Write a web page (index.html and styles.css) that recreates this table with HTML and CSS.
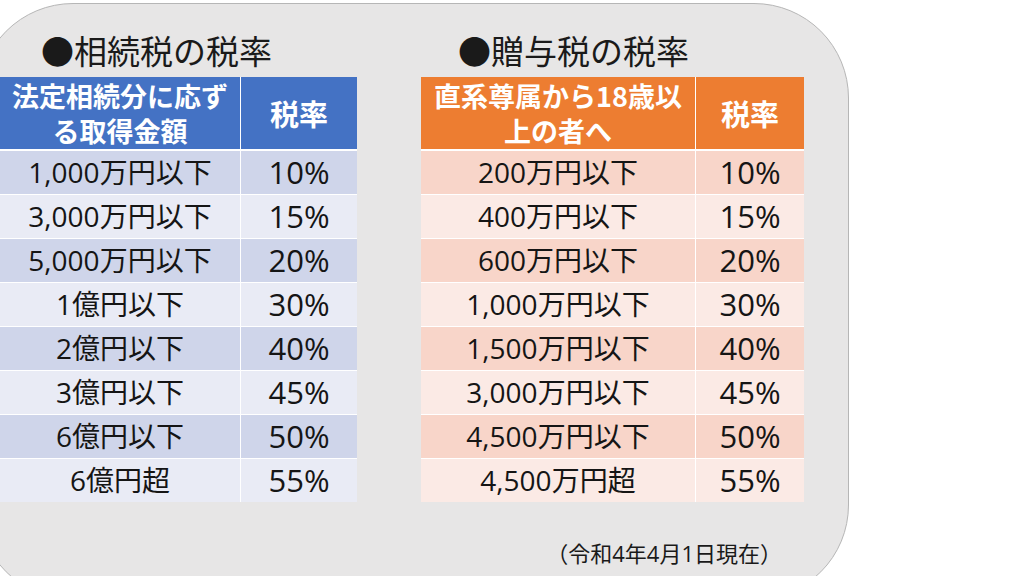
FILE: index.html
```html
<!DOCTYPE html>
<html lang="ja">
<head>
<meta charset="utf-8">
<title>相続税・贈与税の税率</title>
<link rel="stylesheet" href="styles.css">
</head>
<body>
<div class="panel">
  <div class="columns">
    <section class="col col-left">
      <h2 class="title">●相続税の税率</h2>
      <div class="grid grid-blue">
        <div class="th th-amount">法定相続分に応ず<br>る取得金額</div>
        <div class="th th-rate">税率</div>
        <div class="td band">1,000万円以下</div><div class="td band rate">10%</div>
        <div class="td">3,000万円以下</div><div class="td rate">15%</div>
        <div class="td band">5,000万円以下</div><div class="td band rate">20%</div>
        <div class="td">1億円以下</div><div class="td rate">30%</div>
        <div class="td band">2億円以下</div><div class="td band rate">40%</div>
        <div class="td">3億円以下</div><div class="td rate">45%</div>
        <div class="td band">6億円以下</div><div class="td band rate">50%</div>
        <div class="td">6億円超</div><div class="td rate">55%</div>
      </div>
    </section>
    <section class="col col-right">
      <h2 class="title">●贈与税の税率</h2>
      <div class="grid grid-orange">
        <div class="th th-amount">直系尊属から18歳以<br>上の者へ</div>
        <div class="th th-rate">税率</div>
        <div class="td band">200万円以下</div><div class="td band rate">10%</div>
        <div class="td">400万円以下</div><div class="td rate">15%</div>
        <div class="td band">600万円以下</div><div class="td band rate">20%</div>
        <div class="td">1,000万円以下</div><div class="td rate">30%</div>
        <div class="td band">1,500万円以下</div><div class="td band rate">40%</div>
        <div class="td">3,000万円以下</div><div class="td rate">45%</div>
        <div class="td band">4,500万円以下</div><div class="td band rate">50%</div>
        <div class="td">4,500万円超</div><div class="td rate">55%</div>
      </div>
      <p class="note">（令和4年4月1日現在）</p>
    </section>
  </div>
</div>
</body>
</html>
```

FILE: styles.css
```css
html, body {
  margin: 0;
  padding: 0;
  background: #ffffff;
  overflow: hidden;
  width: 1024px;
  height: 576px;
}

body {
  font-family: "Noto Sans CJK JP", "Noto Sans", sans-serif;
  color: #1a1a1a;
}

.panel {
  box-sizing: border-box;
  width: 871px;
  height: 597px;
  margin: 3px 0 0 -22px;
  padding-left: 22px;
  background: #e7e6e6;
  border: 1px solid #b6b6b6;
  border-radius: 95px;
}

.columns {
  display: flex;
  gap: 64px;
  margin-left: -1px;
}

.col-left { width: 357px; }
.col-right { width: 383px; }

.title {
  margin: 0;
  padding-top: 30px;
  height: 32px;
  margin-bottom: 11px;
  font-size: 33px;
  line-height: 32px;
  font-weight: 400;
  color: #1a1a1a;
  white-space: nowrap;
}

.col-left .title { padding-left: 41px; }
.col-right .title { padding-left: 37px; }

.grid {
  display: grid;
  column-gap: 1px;
  row-gap: 1px;
  background: #ffffff;
}

.grid-blue { grid-template-columns: 240px 116px; }
.grid-orange { grid-template-columns: 274px 108px; }

.th {
  height: 72px;
  margin-bottom: 1px;
  display: flex;
  align-items: center;
  justify-content: center;
  text-align: center;
  color: #ffffff;
  font-weight: 700;
}

.th-amount {
  font-size: 27px;
  line-height: 35px;
}

.th-rate {
  font-size: 29px;
  line-height: 35px;
}

.grid-blue .th { background: #4472c4; }
.grid-orange .th { background: #ed7d31; }

.td {
  height: 43px;
  display: flex;
  align-items: center;
  justify-content: center;
  font-family: "Open Sans", "Noto Sans CJK JP", sans-serif;
  font-size: 28px;
  font-weight: 400;
  line-height: 43px;
  color: #151515;
  white-space: nowrap;
}

.rate { font-size: 31px; }

.grid-blue .td { background: #e9ebf5; }
.grid-blue .td.band { background: #cfd5ea; }
.grid-orange .td { background: #fbeae5; }
.grid-orange .td.band { background: #f8d5c9; }

.note {
  margin: 39px 0 0;
  padding-right: 22px;
  text-align: right;
  font-family: "Open Sans", "Noto Sans CJK JP", sans-serif;
  font-size: 22px;
  font-weight: 400;
  line-height: 24px;
  color: #1a1a1a;
}
```
